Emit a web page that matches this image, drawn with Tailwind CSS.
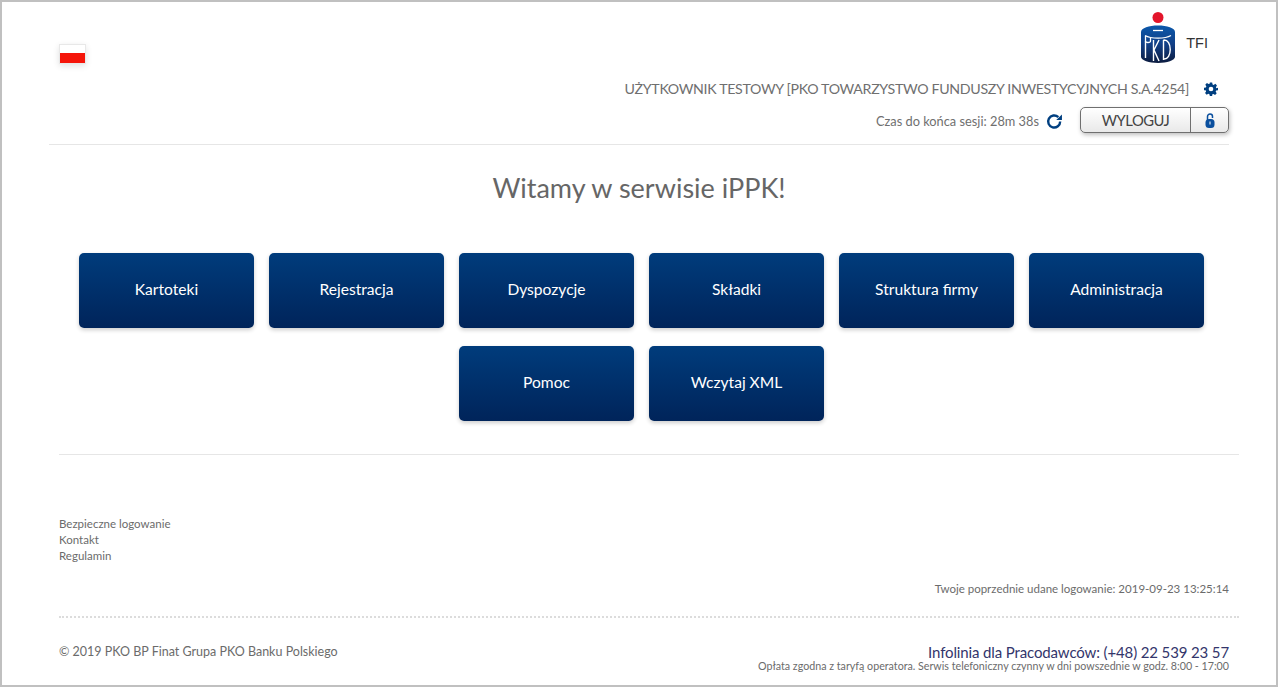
<!DOCTYPE html>
<html lang="pl">
<head>
    <meta charset="UTF-8">
    <title>iPPK</title>
    <script src="https://cdn.jsdelivr.net/npm/@tailwindcss/browser@4"></script>
</head>
<body class="bg-white font-['Lato',sans-serif] text-[#6b6b6b]">
    <div class="w-[1278px] h-[687px] border-2 border-[#c0c0c0] overflow-hidden">
        <!-- naglowek -->
        <header class="mx-[47px] h-[143px] border-b border-[#e6e6e6] flex justify-between">
            <div class="pt-[42px] pl-[10px]">
                <div class="w-[27px] h-[20px] border border-[#e8e8e8] shadow-[0_2px_6px_rgba(0,0,0,0.12)]">
                    <div class="h-[8px] bg-white"></div>
                    <div class="h-[10px] bg-[#f5150a]"></div>
                </div>
            </div>
            <div class="flex flex-col items-end">
                <div class="flex items-center h-[61px] pt-[10px] pr-[21px]">
                    <svg width="36" height="51" viewBox="0 0 36 51" class="mr-[10px]">
                        <defs>
                            <linearGradient id="logo" x1="0" y1="0" x2="0" y2="1">
                                <stop offset="0" stop-color="#0a58ab"/>
                                <stop offset="0.5" stop-color="#123f86"/>
                                <stop offset="1" stop-color="#0b1b3f"/>
                            </linearGradient>
                        </defs>
                        <circle cx="18" cy="5.500" r="5.500" fill="#e3152b"/>
                        <path d="M1 20c0-4 8-6.500 17-6.500S35 16 35 20v25c0 3-8 6-17 6S1 48 1 45z" fill="url(#logo)"/>
                        <path d="M13 18.500h10" stroke="#fff" stroke-width="1.300"/>
                        <path d="M5 23.500c6 3.500 20 3.500 26 0" stroke="#fff" stroke-width="1.300" fill="none"/>
                        <path d="M5.500 24v5c0 2 5 2 5 0v-3" stroke="#fff" stroke-width="1.300" fill="none"/>
                        <path d="M5.500 29v17M13.500 28v21M14 38l5-10M14 38l5 11M23.500 28v20M23.500 28c9-1 9 20 0 19" stroke="#fff" stroke-width="1.400" fill="none"/>
                    </svg>
                    <span class="pt-[12px] text-[14.500px] text-[#333] font-['Liberation_Sans',sans-serif]">TFI</span>
                </div>
                <div class="flex items-center h-[34px] text-[14.200px] tracking-[-0.33px] text-[#6f6f6f] mt-[9px] pb-[0px]">
                    <span>UŻYTKOWNIK TESTOWY [PKO TOWARZYSTWO FUNDUSZY INWESTYCYJNYCH S.A.4254]</span>
                    <svg width="14" height="14" viewBox="0 0 24 24" fill="#003f80" class="ml-[15px] mr-[11px]">
                        <path fill-rule="evenodd" d="M10 1h4l.7 3.200 1.900.8 2.800-1.800 2.800 2.800-1.800 2.800.8 1.900L24 10v4l-3.200.7-.8 1.900 1.800 2.800-2.800 2.800-2.800-1.800-1.900.8L14 24h-4l-.7-3.200-1.900-.8-2.800 1.800-2.800-2.800 1.800-2.800-.8-1.900L0 14v-4l3.200-.7.800-1.900L2.200 4.600 5 1.800l2.800 1.800 1.900-.8zM12 8a4 4 0 1 0 0 8 4 4 0 0 0 0-8z"/>
                    </svg>
                </div>
                <div class="flex items-center h-[31px] text-[12.800px] text-[#6f6f6f]">
                    <span>Czas do końca sesji: 28m 38s</span>
                    <svg width="17" height="17" viewBox="0 0 24 24" fill="none" stroke="#003f80" stroke-width="3.400" class="ml-[7px] mr-[17px]">
                        <path d="M20 12a8.500 8.500 0 1 1-2.600-6.100"/>
                        <path d="M22.500 2v8h-8z" fill="#003f80" stroke="none"/>
                    </svg>
                    <div class="-mt-[3px] flex w-[149px] h-[26px] rounded-[5px] border border-[#6f6f6f] shadow-[1px_2px_4px_rgba(0,0,0,0.25)] bg-gradient-to-b from-white to-[#e9e9e9]">
                        <span class="w-[110px] border-r border-[#6f6f6f] flex items-center justify-center text-[14.800px] tracking-[-0.5px] text-[#444]">WYLOGUJ</span>
                        <span class="flex-1 flex items-center justify-center">
                            <svg width="10" height="15" viewBox="0 0 10 15">
                                <path d="M2.500 7V3.500a2.500 2.500 0 0 1 5 0V5" stroke="#0a4f9e" stroke-width="1.500" fill="none"/>
                                <rect x="0.500" y="6" width="9" height="9" rx="3.500" fill="#0a4f9e"/>
                                <rect x="4.500" y="8.500" width="1" height="3" fill="#fff"/>
                            </svg>
                        </span>
                    </div>
                </div>
            </div>
        </header>

        <h1 class="text-center text-[27px] leading-[34px] text-[#666] mt-[26px]">Witamy w serwisie iPPK!</h1>

        <!-- kafelki -->
        <main class="mx-[77px] mt-[48px] w-[1125px] flex flex-wrap justify-center gap-x-[15px] gap-y-[18px] text-[15.600px] text-white">
            <a class="w-[175px] h-[75px] pb-[2px] rounded-[5px] flex items-center justify-center bg-gradient-to-b from-[#003c7c] to-[#00245a] shadow-[0_2px_4px_rgba(0,0,0,0.2)]">Kartoteki</a>
            <a class="w-[175px] h-[75px] pb-[2px] rounded-[5px] flex items-center justify-center bg-gradient-to-b from-[#003c7c] to-[#00245a] shadow-[0_2px_4px_rgba(0,0,0,0.2)]">Rejestracja</a>
            <a class="w-[175px] h-[75px] pb-[2px] rounded-[5px] flex items-center justify-center bg-gradient-to-b from-[#003c7c] to-[#00245a] shadow-[0_2px_4px_rgba(0,0,0,0.2)]">Dyspozycje</a>
            <a class="w-[175px] h-[75px] pb-[2px] rounded-[5px] flex items-center justify-center bg-gradient-to-b from-[#003c7c] to-[#00245a] shadow-[0_2px_4px_rgba(0,0,0,0.2)]">Składki</a>
            <a class="w-[175px] h-[75px] pb-[2px] rounded-[5px] flex items-center justify-center bg-gradient-to-b from-[#003c7c] to-[#00245a] shadow-[0_2px_4px_rgba(0,0,0,0.2)]">Struktura firmy</a>
            <a class="w-[175px] h-[75px] pb-[2px] rounded-[5px] flex items-center justify-center bg-gradient-to-b from-[#003c7c] to-[#00245a] shadow-[0_2px_4px_rgba(0,0,0,0.2)]">Administracja</a>
            <a class="w-[175px] h-[75px] pb-[2px] rounded-[5px] flex items-center justify-center bg-gradient-to-b from-[#003c7c] to-[#00245a] shadow-[0_2px_4px_rgba(0,0,0,0.2)]">Pomoc</a>
            <a class="w-[175px] h-[75px] pb-[2px] rounded-[5px] flex items-center justify-center bg-gradient-to-b from-[#003c7c] to-[#00245a] shadow-[0_2px_4px_rgba(0,0,0,0.2)]">Wczytaj XML</a>
        </main>

        <!-- stopka -->
        <footer class="mx-[57px] w-[1180px] mt-[33px] border-t border-[#e6e6e6] pt-[61px] text-[11.500px]">
            <div class="leading-[16px]">
                <a class="block">Bezpieczne logowanie</a>
                <a class="block">Kontakt</a>
                <a class="block">Regulamin</a>
            </div>
            <p class="text-right pr-[10px] mt-[17px] leading-[16px]">Twoje poprzednie udane logowanie: 2019-09-23 13:25:14</p>
            <div class="mt-[19px] border-t-2 border-dotted border-[#dcdcdc] pt-[24px] pr-[10px] flex justify-between">
                <span class="text-[12.500px] leading-[20px]">© 2019 PKO BP Finat Grupa PKO Banku Polskiego</span>
                <div class="text-right">
                    <p class="text-[15px] tracking-[-0.13px] leading-[18px] text-[#33356b] mt-[1px]">Infolinia dla Pracodawców: (+48) 22 539 23 57</p>
                    <p class="text-[10.700px] leading-[12px] -mt-[1px]">Opłata zgodna z taryfą operatora. Serwis telefoniczny czynny w dni powszednie w godz. 8:00 - 17:00</p>
                </div>
            </div>
        </footer>
    </div>
</body>
</html>
